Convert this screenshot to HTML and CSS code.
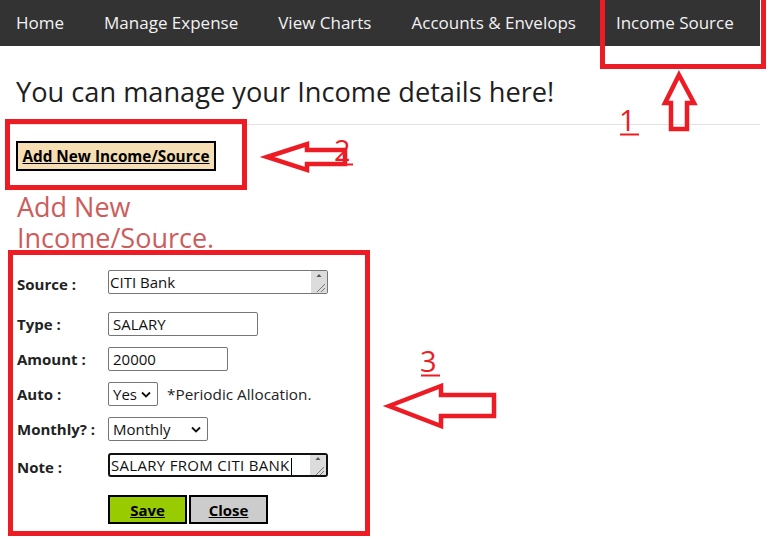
FILE: index.html
```html
<!DOCTYPE html>
<html lang="en">
<head>
<meta charset="utf-8">
<title>Income Source</title>
<link rel="stylesheet" href="styles.css">
</head>
<body>
<div class="page">
  <nav class="topnav">
    <a class="nav-link first" href="#">Home</a>
    <a class="nav-link" href="#">Manage Expense</a>
    <a class="nav-link" href="#">View Charts</a>
    <a class="nav-link" href="#">Accounts &amp; Envelops</a>
    <a class="nav-link" href="#">Income Source</a>
  </nav>
  <main class="content">
    <h2 class="page-title">You can manage your Income details here!</h2>
    <hr class="divider">
    <button class="btn-add" type="button">Add New Income/Source</button>
    <section class="form-panel">
      <h2 class="form-title">Add New Income/Source.</h2>
      <form class="income-form">
        <div class="form-row row-source">
          <label class="lbl">Source :</label>
          <div class="ta">
            <span class="ta-text">CITI Bank</span>
            <span class="ta-bar"><svg width="16" height="22" viewBox="0 0 16 22"><path d="M8 3 L10.5 6 L5.5 6 Z" fill="#555"/><path d="M14 13 L6 21 M14 17 L10 21" stroke="#777" stroke-width="1"/></svg></span>
          </div>
        </div>
        <div class="form-row">
          <label class="lbl">Type :</label>
          <input class="field w-type" type="text" value="SALARY">
        </div>
        <div class="form-row">
          <label class="lbl">Amount :</label>
          <input class="field w-amount" type="text" value="20000">
        </div>
        <div class="form-row">
          <label class="lbl">Auto :</label>
          <div class="sel w-auto"><span>Yes</span><svg width="10" height="7" viewBox="0 0 10 7"><path d="M1 1.5 L5 5.5 L9 1.5" fill="none" stroke="#111" stroke-width="1.8"/></svg></div>
          <span class="hint">*Periodic Allocation.</span>
        </div>
        <div class="form-row row-monthly">
          <label class="lbl">Monthly? :</label>
          <div class="sel w-monthly"><span>Monthly</span><svg width="10" height="7" viewBox="0 0 10 7"><path d="M1 1.5 L5 5.5 L9 1.5" fill="none" stroke="#111" stroke-width="1.8"/></svg></div>
        </div>
        <div class="form-row row-note">
          <label class="lbl">Note :</label>
          <div class="ta ta-focus">
            <span class="ta-text">SALARY FROM CITI BANK<i class="caret"></i></span>
            <span class="ta-bar"><svg width="16" height="22" viewBox="0 0 16 22"><path d="M8 2 L10.5 5 L5.5 5 Z" fill="#555"/><path d="M14 12 L6 20 M14 16 L10 20" stroke="#777" stroke-width="1"/></svg></span>
          </div>
        </div>
        <div class="form-row row-actions">
          <button class="btn btn-save" type="button">Save</button>
          <button class="btn btn-close" type="button">Close</button>
        </div>
      </form>
    </section>
  </main>
</div>
<svg class="annot" width="773" height="539" viewBox="0 0 773 539">
  <g fill="none" stroke="#ed1c24" stroke-width="5">
    <rect x="602.5" y="-3" width="161" height="69.5"/>
    <rect x="7.5" y="121.5" width="237" height="66"/>
    <rect x="10.5" y="252.5" width="357" height="281"/>
  </g>
  <g fill="none" stroke="#ed1c24" stroke-width="4.5" stroke-linejoin="miter">
    <polygon points="679,75 694,103 687,103 687,129 671,129 671,103 665,103"/>
    <polygon points="267,157 307,144 307,150 345,150 345,164 307,164 307,170"/>
    <polygon points="389,406 441,386 441,395 494,395 494,416 441,416 441,426"/>
  </g>
  <g class="num" fill="#ed1c24">
    <text x="619" y="131">1</text>
    <text x="334" y="161">2</text>
    <text x="420" y="372">3</text>
  </g>
  <g stroke="#ed1c24" stroke-width="2">
    <line x1="620" y1="134.5" x2="639" y2="134.5"/>
    <line x1="335" y1="164.5" x2="353" y2="164.5"/>
    <line x1="421" y1="375.5" x2="440" y2="375.5"/>
  </g>
</svg>
</body>
</html>
```
FILE: styles.css
```css
html, body {
  margin: 0;
  padding: 0;
  background: #fff;
}
body {
  font-family: "Open Sans", "Noto Sans", sans-serif;
  color: #222;
  position: relative;
  width: 773px;
  height: 539px;
  overflow: hidden;
}
.page {
  width: 760px;
}
.topnav {
  display: flex;
  background: #333;
  height: 46px;
  overflow: hidden;
}
.nav-link {
  display: block;
  flex: none;
  white-space: nowrap;
  color: #f2f2f2;
  text-decoration: none;
  font-size: 17px;
  line-height: 46px;
  padding: 0 20px;
}
.nav-link.first {
  padding-left: 16px;
}
.content {
  padding: 0 0 0 16px;
}
.page-title {
  margin: 30px 0 0;
  font-size: 27.2px;
  line-height: 32px;
  font-weight: 500;
  color: #1e1e1e;
  white-space: nowrap;
}
.divider {
  margin: 16px 0 0 -8px;
  border: 0;
  border-top: 1px solid #e2e2e2;
  height: 0;
}
.btn-add {
  display: block;
  margin-top: 16px;
  width: 200px;
  height: 30px;
  background: #f5deb3;
  border: 2px solid #000;
  font-family: inherit;
  font-size: 15.3px;
  font-weight: 700;
  text-decoration: underline;
  color: #000;
  padding: 0;
}
.form-panel {
  width: 240px;
}
.form-title {
  margin: 20px 0 0 1px;
  font-size: 27px;
  line-height: 31px;
  font-weight: 400;
  color: #cd5c5c;
}
.income-form {
  width: 360px;
  padding-top: 17px;
}
.form-row {
  display: flex;
  align-items: center;
  height: 24px;
  margin-bottom: 11px;
}
.row-source { margin-bottom: 18px; }
.row-monthly { margin-bottom: 12px; }
.row-note { margin-bottom: 18px; }
.row-source .lbl { padding-top: 4px; }
.row-note .lbl { padding-top: 3px; }
.lbl {
  flex: none;
  font-size: 15px;
  font-weight: 700;
  color: #222;
  padding-left: 1px;
  box-sizing: border-box;
  width: 92px;
}
.field {
  box-sizing: border-box;
  height: 24px;
  border: 1px solid #767676;
  border-radius: 2px;
  padding: 0 4px;
  font-family: inherit;
  font-size: 15px;
  color: #111;
  background: #fff;
}
.w-type { width: 150px; }
.w-amount { width: 120px; }
.ta {
  box-sizing: border-box;
  display: flex;
  width: 220px;
  height: 24px;
  border: 1px solid #767676;
  border-radius: 2px;
  background: #fff;
  overflow: hidden;
}
.ta-focus {
  border: 2px solid #111;
  border-radius: 3px;
}
.ta-text {
  flex: 1;
  font-size: 15px;
  line-height: 22px;
  padding-left: 1px;
  color: #111;
  white-space: nowrap;
  overflow: hidden;
  position: relative;
}
.ta-focus .ta-text { line-height: 20px; letter-spacing: 0.3px; }
.caret {
  display: inline-block;
  width: 1px;
  height: 18px;
  background: #000;
  vertical-align: middle;
  margin-left: 1px;
}
.ta-bar {
  width: 16px;
  flex: none;
  background: #dcdcdc;
  display: flex;
}
.sel {
  box-sizing: border-box;
  display: flex;
  align-items: center;
  justify-content: space-between;
  height: 24px;
  border: 1px solid #767676;
  border-radius: 2px;
  padding: 0 6px 0 4px;
  font-size: 15px;
  color: #111;
  background: #fff;
}
.w-auto { width: 50px; }
.w-monthly { width: 100px; }
.hint {
  margin-left: 9px;
  font-size: 15.3px;
  color: #222;
}
.row-actions {
  height: 29px;
  padding-left: 92px;
  gap: 2px;
}
.btn {
  box-sizing: border-box;
  width: 79px;
  height: 29px;
  border: 2px solid #000;
  font-family: inherit;
  font-size: 15px;
  font-weight: 700;
  text-decoration: underline;
  color: #000;
  padding: 0;
}
.btn-save { background: #99cc00; }
.btn-close { background: #cccccc; }
.annot {
  position: absolute;
  left: 0;
  top: 0;
  pointer-events: none;
}
.num text {
  font-family: "Open Sans", "Noto Sans", sans-serif;
  font-size: 29px;
}
```
